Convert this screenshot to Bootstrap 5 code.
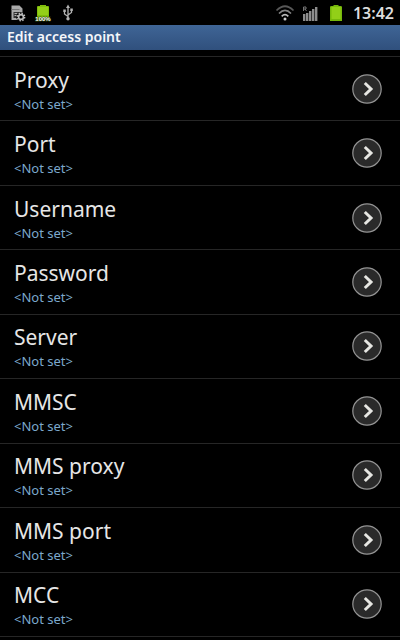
<!DOCTYPE html>
<html lang="en">
<head>
<meta charset="utf-8">
<meta name="viewport" content="width=device-width, initial-scale=1">
<title>Edit access point</title>
<link href="https://cdn.jsdelivr.net/npm/bootstrap@5.3.0/dist/css/bootstrap.min.css" rel="stylesheet">
<style>
body{background:#000;color:#e8e8e8;font-family:"Noto Sans","Open Sans",sans-serif}
.statusbar{height:25px;padding:0 6px 0 9px}
.statusbar svg{display:block}
.clock{font-size:16px;line-height:24px;font-weight:600;color:#dcdcdc}
.titlebar{height:25px;padding:0 7px;background:linear-gradient(#3f6596,#30507d);color:#f4f6fa;font-size:14px;line-height:24px;font-weight:600}
.settings{margin:6px 0 3px;border-top:1px solid #262626}
.setting{flex:1 0 0;min-height:64px;padding:0 18px 0 14px;border:0;border-bottom:1px solid #262626;background:none;color:inherit}
.setting-text{padding-top:2px}
.setting-name{font-size:21px;line-height:28px;color:#e6e6e6}
.setting-value{font-size:13px;line-height:20px;color:#7ca8cc}
</style>
<script src="https://cdn.jsdelivr.net/npm/bootstrap@5.3.0/dist/js/bootstrap.bundle.min.js"></script>
</head>
<body>
<svg class="d-none" aria-hidden="true">
<symbol id="go" viewBox="0 0 30 30"><circle cx="15" cy="15" r="14.2" fill="#2a2a2a" stroke="#949494" stroke-width="1.2"/><path d="M12.8 9 19 15l-6.200 6" fill="none" stroke="#e6e6e2" stroke-width="3"/></symbol>
</svg>
<div class="d-flex flex-column min-vh-100">
<header>
<div class="statusbar d-flex align-items-center justify-content-between">
<div class="d-flex align-items-center">
<svg width="17" height="18" viewBox="0 0 17 18" aria-hidden="true"><path d="M2.500 1.500h8l3 3V10h-3v6h-8z" fill="#a9a9a9"/><path d="M4.500 8h6v6h-6z" fill="#333"/><path d="M5.500 9h3v1h-3zm0 2h3v1h-3z" fill="#b0b0b0"/><path d="M2.500 5.500h8" stroke="#777"/><circle cx="12" cy="13" r="4.800" fill="#000"/><circle cx="12" cy="13" r="2.400" fill="none" stroke="#bcbcbc" stroke-width="1.600"/><circle cx="12" cy="13" r="3.700" fill="none" stroke="#bcbcbc" stroke-width="1.400" stroke-dasharray="1.500 1.400"/></svg>
<svg class="ms-2" width="18" height="18" viewBox="0 0 18 18" role="img" aria-label="Battery 100%"><path d="M6 1h6v1h2q1 0 1 1v13H3V3q0-1 1-1h2z" fill="#80bd0b"/><path d="M4 3h10v8H4z" fill="#94cf18"/><text x="9" y="17" text-anchor="middle" font-family="Liberation Sans,sans-serif" font-weight="700" font-size="6" fill="#fff" stroke="#294400" stroke-width="1.200" paint-order="stroke">100%</text></svg>
<svg class="ms-2" width="18" height="18" viewBox="0 0 18 18" aria-hidden="true"><path d="M8 3v11M8 12.500 4.500 10V7M8 11l3.500-2.500V6" fill="none" stroke="#b2b2b2" stroke-width="1.300"/><path d="m8 .5 2 3.500H6zM3.300 5.500h2.500V8H3.300zM10.300 4.500h2.500V7h-2.500z" fill="#b2b2b2"/><circle cx="8" cy="14.800" r="1.700" fill="#b2b2b2"/></svg>
</div>
<div class="d-flex align-items-center">
<svg width="20" height="18" viewBox="0 0 20 18" aria-hidden="true"><g fill="none" stroke-width="1.700"><path d="M1.500 6.500Q10-2 18.500 6.500" stroke="#585858"/><path d="M4 9.500Q10 3.500 16 9.500" stroke="#858585"/><path d="M6.700 12.300Q10 9 13.300 12.300" stroke="#bdbdbd"/></g><circle cx="10" cy="15" r="1.500" fill="#ccc"/></svg>
<svg class="ms-2" width="16" height="18" viewBox="0 0 16 18" aria-hidden="true"><path d="M0 10h2.400v7H0zM3 9h2.400v8H3zM6 7h2.400v10H6zM9 5h2.400v12H9zM12 3h2.400v14H12z" fill="#8c8c8c"/><path d="M.5 7V3H3v2H.5M2 5l1.500 2" fill="none" stroke="#777"/></svg>
<svg class="ms-2" width="18" height="18" viewBox="0 0 18 18" aria-hidden="true"><path d="M6.500 1h5v1h2q1.500 0 1.500 1v14H3V3q0-1 1.500-1h2z" fill="#76b80b"/><path d="M4.500 3h9v12h-9z" fill="#92cf18"/></svg>
<time class="clock ms-2">13:42</time>
</div>
</div>
<h1 class="titlebar m-0">Edit access point</h1>
</header>
<main class="settings d-flex flex-column flex-grow-1">
<button type="button" class="setting d-flex align-items-center justify-content-between text-start"><span class="setting-text"><span class="setting-name d-block">Proxy</span><span class="setting-value d-block">&lt;Not set&gt;</span></span><svg width="30" height="30" aria-hidden="true"><use href="#go"/></svg></button>
<button type="button" class="setting d-flex align-items-center justify-content-between text-start"><span class="setting-text"><span class="setting-name d-block">Port</span><span class="setting-value d-block">&lt;Not set&gt;</span></span><svg width="30" height="30" aria-hidden="true"><use href="#go"/></svg></button>
<button type="button" class="setting d-flex align-items-center justify-content-between text-start"><span class="setting-text"><span class="setting-name d-block">Username</span><span class="setting-value d-block">&lt;Not set&gt;</span></span><svg width="30" height="30" aria-hidden="true"><use href="#go"/></svg></button>
<button type="button" class="setting d-flex align-items-center justify-content-between text-start"><span class="setting-text"><span class="setting-name d-block">Password</span><span class="setting-value d-block">&lt;Not set&gt;</span></span><svg width="30" height="30" aria-hidden="true"><use href="#go"/></svg></button>
<button type="button" class="setting d-flex align-items-center justify-content-between text-start"><span class="setting-text"><span class="setting-name d-block">Server</span><span class="setting-value d-block">&lt;Not set&gt;</span></span><svg width="30" height="30" aria-hidden="true"><use href="#go"/></svg></button>
<button type="button" class="setting d-flex align-items-center justify-content-between text-start"><span class="setting-text"><span class="setting-name d-block">MMSC</span><span class="setting-value d-block">&lt;Not set&gt;</span></span><svg width="30" height="30" aria-hidden="true"><use href="#go"/></svg></button>
<button type="button" class="setting d-flex align-items-center justify-content-between text-start"><span class="setting-text"><span class="setting-name d-block">MMS proxy</span><span class="setting-value d-block">&lt;Not set&gt;</span></span><svg width="30" height="30" aria-hidden="true"><use href="#go"/></svg></button>
<button type="button" class="setting d-flex align-items-center justify-content-between text-start"><span class="setting-text"><span class="setting-name d-block">MMS port</span><span class="setting-value d-block">&lt;Not set&gt;</span></span><svg width="30" height="30" aria-hidden="true"><use href="#go"/></svg></button>
<button type="button" class="setting d-flex align-items-center justify-content-between text-start"><span class="setting-text"><span class="setting-name d-block">MCC</span><span class="setting-value d-block">&lt;Not set&gt;</span></span><svg width="30" height="30" aria-hidden="true"><use href="#go"/></svg></button>
</main>
</div>
</body>
</html>
